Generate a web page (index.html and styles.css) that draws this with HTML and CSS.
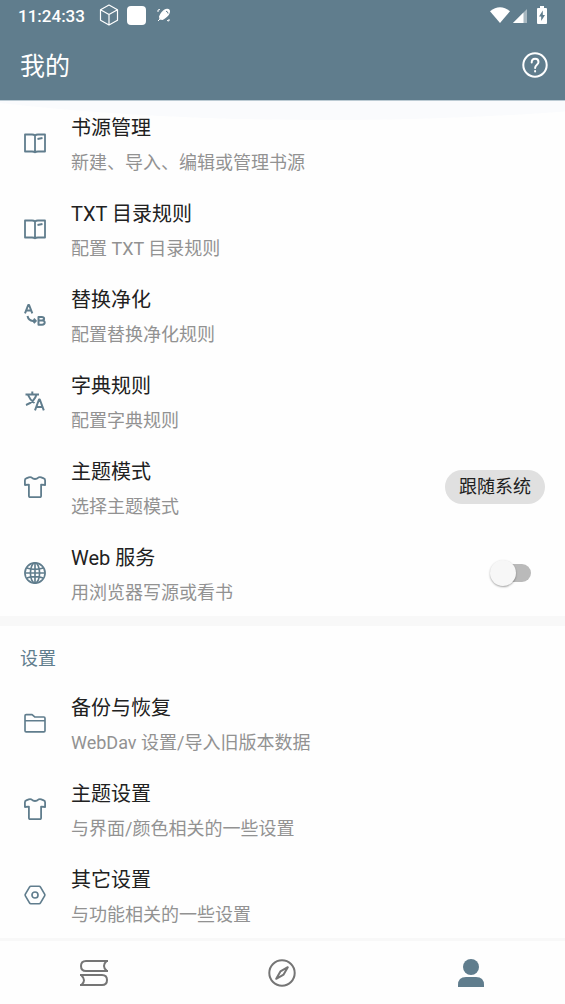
FILE: index.html
```html
<!DOCTYPE html>
<html lang="zh-CN">
<head>
<meta charset="utf-8">
<meta name="viewport" content="width=device-width, initial-scale=1">
<title>我的</title>
<link rel="stylesheet" href="styles.css">
</head>
<body>
<svg class="defs" aria-hidden="true">
  <symbol id="book" viewBox="0 0 22 22"><path d="M1 2.500h7q2 0 3 1 1-1 3-1h7v17h-7q-2 0-3 .8-1-.8-3-.8H1zM11 3.500v16.500M13.500 7l5-1"/></symbol>
  <symbol id="shirt" viewBox="0 0 22 22"><path d="M7.300 1.300q3.700 3.400 7.400 0 1.300-.4 2.500 0l2.600 1.100q1.300.5 1.300 2v4.600l-4-.4V20q0 1.200-1.200 1.200H6.100Q4.900 21.200 4.900 20V8.600L.9 9V4.400q0-1.500 1.300-2l2.600-1.100q1.200-.4 2.500 0z"/></symbol>
</svg>
<header class="header">
  <div class="status">
    <span class="clock">11:24:33</span>
    <svg class="s-cube" viewBox="0 0 20 22"><path d="M10 1l8.500 4.700v10.600L10 21l-8.500-4.700V5.700zM1.500 5.700L10 10.500l8.500-4.800M10 10.500V21"/></svg>
    <span class="s-square"></span>
    <svg class="s-rocket" viewBox="0 0 14 14"><path d="M2.500 11.500L2 8.500C4 4.500 6.500 1 10 .8q3-.2 3 2.700C12.800 7 9.500 10 5.500 12z"/><path class="line" d="M1 4V2l2-.5M1 13l3-3M10 12.500l2 .5V11"/><path class="cut" d="M9 3.200q2 .3 2 2.300"/></svg>
    <span class="spacer"></span>
    <svg class="s-wifi" viewBox="0 0 20 16"><path d="M0 4.200Q10-3.700 20 4.200L10 16z"/></svg>
    <svg class="s-signal" viewBox="0 0 14 14"><path d="M0 14L14 0v14z" opacity=".45"/><path d="M0 14L10.500 3.500V14z"/></svg>
    <svg class="s-battery" viewBox="0 0 10 18"><path d="M3 0h4v2h2q1 0 1 1v14q0 1-1 1H1q-1 0-1-1V3q0-1 1-1h2z"/><path class="bolt" d="M5.800 4.500L2 10.500h2.200v4.500L8 9H5.800z"/></svg>
  </div>
  <div class="titlebar">
    <h1>我的</h1>
    <button class="help" type="button" aria-label="帮助">
      <svg viewBox="0 0 26 26"><circle cx="13" cy="13" r="11.700"/><path d="M9.700 10.500q0-3.700 3.400-3.700t3.400 3.300c0 2.700-3.400 2.700-3.400 5.900M13.100 19v.4"/></svg>
    </button>
  </div>
</header>
<main class="content">
  <svg class="glow" viewBox="0 0 565 20" preserveAspectRatio="none" aria-hidden="true"><path d="M0 0H565V11Q450 20 330 20Q150 20 0 2z"/></svg>
  <section class="group">
    <a class="row" href="#sources"><svg class="icon"><use href="#book"/></svg><span class="text"><span class="name">书源管理</span><span class="desc">新建、导入、编辑或管理书源</span></span></a>
    <a class="row" href="#txt"><svg class="icon"><use href="#book"/></svg><span class="text"><span class="name">TXT 目录规则</span><span class="desc">配置 TXT 目录规则</span></span></a>
    <a class="row" href="#replace"><svg class="icon bold" viewBox="0 0 22 22"><path d="M1 9.300L4.200 1h.9l3.200 8.300M2.200 6.600h4.900M14.500 13v7.700h3.600q2.600 0 2.600-2.100t-2.600-2h-3.600h3.200q2.400 0 2.400-1.800T17.700 13zM3.500 12q1 4.500 5.500 4.900h3M9.700 14.700l2.200 2.200-2.200 2.200"/></svg><span class="text"><span class="name">替换净化</span><span class="desc">配置替换净化规则</span></span></a>
    <a class="row" href="#dict"><svg class="icon bold" viewBox="0 0 22 22"><path d="M1.500 4.500h13.500M8.300 1.500v3M12.500 4.500Q10.500 12 2 15M4 5q2 5 6.500 8M11 20.300l4-10.800h.8l4 10.800M12.300 17h6.200"/></svg><span class="text"><span class="name">字典规则</span><span class="desc">配置字典规则</span></span></a>
    <div class="row"><svg class="icon"><use href="#shirt"/></svg><span class="text"><span class="name">主题模式</span><span class="desc">选择主题模式</span></span><button class="chip" type="button">跟随系统</button></div>
    <label class="row"><svg class="icon" viewBox="0 0 24 24"><circle cx="12" cy="12" r="11"/><ellipse cx="12" cy="12" rx="5" ry="11"/><path d="M12 1v22M1 12h22M3 6.500q9 3 18 0M3 17.500q9-3 18 0"/></svg><span class="text"><span class="name">Web 服务</span><span class="desc">用浏览器写源或看书</span></span><input class="switch" type="checkbox"></label>
  </section>
  <section class="group">
    <h2>设置</h2>
    <a class="row" href="#backup"><svg class="icon" viewBox="0 0 24 24"><path d="M1.100 20.500V4q0-1.200 1.200-1.200h6.500l3.200 2.700h9.700q1.200 0 1.200 1.200v13.800q0 1.200-1.200 1.200H2.300q-1.200 0-1.200-1.200zM1.100 9.500h21.800"/></svg><span class="text"><span class="name">备份与恢复</span><span class="desc">WebDav 设置/导入旧版本数据</span></span></a>
    <a class="row" href="#theme"><svg class="icon"><use href="#shirt"/></svg><span class="text"><span class="name">主题设置</span><span class="desc">与界面/颜色相关的一些设置</span></span></a>
    <a class="row" href="#other"><svg class="icon" viewBox="0 0 24 24"><path d="M7.500 2.500h9q1 0 1.500.9l4.500 7.700q.5.900 0 1.800L18 20.600q-.5.900-1.500.9h-9q-1 0-1.500-.9l-4.500-7.700q-.5-.9 0-1.800L6 3.400q.5-.9 1.500-.9z"/><circle cx="12" cy="12" r="3.300"/></svg><span class="text"><span class="name">其它设置</span><span class="desc">与功能相关的一些设置</span></span></a>
  </section>
</main>
<nav class="nav">
  <a href="#shelf" aria-label="书架"><svg viewBox="0 0 30 30"><path d="M29 3H7Q2 3 2 8t5 5h22M27.500 3q-5 5 0 9.500M1 17h22q5 0 5 5t-5 5H1M2.500 17.500q5 4.500 0 9.500"/></svg></a>
  <a href="#discover" aria-label="发现"><svg viewBox="0 0 30 30"><circle cx="15" cy="15" r="12.700"/><path d="M20.800 9.200l-4.200 7.400-7.400 4.200 4.200-7.400z"/></svg></a>
  <a class="active" href="#me" aria-label="我的"><svg viewBox="0 0 30 30"><circle cx="15" cy="9" r="8"/><path d="M2 29v-2q0-8 8-8h10q8 0 8 8v2z"/></svg></a>
</nav>
</body>
</html>
```

FILE: styles.css
```css
* { box-sizing: border-box; }

body {
  margin: 0;
  min-height: 100vh;
  display: flex;
  flex-direction: column;
  background: #fefefe;
  color: #212121;
  font-family: Roboto, "Noto Sans CJK SC", sans-serif;
}

h1, h2 { margin: 0; font-weight: 400; }
a { color: inherit; text-decoration: none; }
button { border: 0; font: inherit; color: inherit; cursor: pointer; }
svg { display: block; flex: none; fill: none; }
.defs { position: absolute; width: 0; height: 0; }

.header {
  background: #607d8d;
  color: #fff;
  box-shadow: 0 1px #bccbd4;
}

.status {
  display: flex;
  align-items: center;
  height: 30px;
  padding: 0 18px;
}
.clock { font-size: 17px; font-weight: 500; line-height: 26px; margin: 2px 14px 0 0; }
.s-cube { width: 20px; height: 22px; stroke: #fff; stroke-width: 1.2; stroke-linejoin: round; }
.s-square { width: 19px; height: 19px; margin: 0 11px 0 8px; border-radius: 4px; background: #fff; }
.s-rocket { width: 14px; height: 14px; fill: #fff; }
.s-rocket .line { fill: none; stroke: #fff; }
.s-rocket .cut { fill: none; stroke: #607d8d; }
.spacer { flex: 1; }
.s-wifi { width: 20px; height: 16px; fill: #fff; }
.s-signal { width: 14px; height: 14px; margin: 2px 10px 0 3px; fill: #fff; }
.s-battery { width: 10px; height: 18px; fill: #fff; }
.bolt { fill: #607d8d; }

.titlebar {
  display: flex;
  align-items: center;
  justify-content: space-between;
  height: 70px;
  padding: 0 17px 0 20px;
}
.titlebar h1 { padding-top: 4px; font-size: 25px; line-height: 36px; }
.help { padding: 0; background: none; }
.help svg { width: 26px; height: 26px; stroke: #fff; stroke-width: 2; stroke-linecap: round; }

.content { position: relative; flex: 1; }
.glow {
  position: absolute;
  top: 1px;
  left: 0;
  width: 100%;
  height: 19px;
  fill: #fafbfd;
  pointer-events: none;
}

.group + .group { border-top: 10px solid #f8f8f8; }
.group h2 {
  padding: 16px 20px 4px;
  color: #607d8d;
  font-size: 18px;
  line-height: 34px;
}

.row {
  position: relative;
  display: flex;
  align-items: center;
  min-height: 86px;
  padding: 6px 20px 6px 24px;
}
.icon {
  width: 22px;
  height: 22px;
  margin-right: 25px;
  stroke: #607d8d;
  stroke-width: 1.8;
  stroke-linejoin: round;
}
.icon.bold { stroke-width: 2; }
.text { flex: 1; display: flex; flex-direction: column; padding-top: 4px; }
.name { font-size: 20px; line-height: 36px; }
.desc { color: #929292; font-size: 17px; line-height: 34px; }
.desc { font-size: 18px; }

.chip {
  padding: 0 14px;
  border-radius: 17px;
  background: #e0e0e0;
  font-size: 18px;
  line-height: 34px;
}

.switch {
  appearance: none;
  display: flex;
  align-items: center;
  width: 36px;
  height: 18px;
  margin: 0 14px 0 0;
  border-radius: 9px;
  background: #bababa;
  cursor: pointer;
}
.switch::before {
  content: "";
  width: 26px;
  height: 26px;
  margin-left: -5px;
  flex: none;
  border-radius: 50%;
  background: #f7f7f7;
  box-shadow: 0 1px 2px rgba(0, 0, 0, .35);
}
.switch:checked { justify-content: flex-end; background: #a9bac4; }
.switch:checked::before { background: #607d8d; }

.nav {
  display: flex;
  height: 66px;
  border-top: 3px solid #f8f8f8;
}
.nav a { flex: 1; display: flex; align-items: center; justify-content: center; }
.nav svg { width: 30px; height: 30px; stroke: #757575; stroke-width: 2; stroke-linejoin: round; }
.nav .active svg { fill: #607d8d; stroke: none; }
```
